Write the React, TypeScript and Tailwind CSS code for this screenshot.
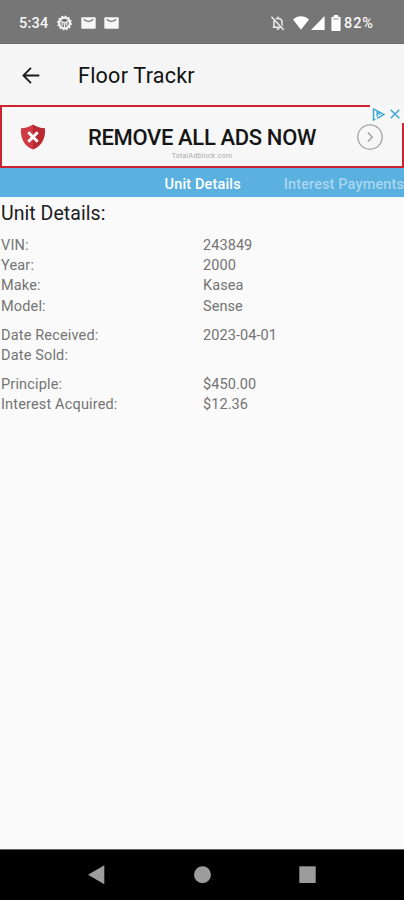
import clsx from 'clsx';

const groups = [
  [
    { label: 'VIN:', value: '243849' },
    { label: 'Year:', value: '2000' },
    { label: 'Make:', value: 'Kasea' },
    { label: 'Model:', value: 'Sense' },
  ],
  [
    { label: 'Date Received:', value: '2023-04-01' },
    { label: 'Date Sold:', value: '' },
  ],
  [
    { label: 'Principle:', value: '$450.00' },
    { label: 'Interest Acquired:', value: '$12.36' },
  ],
];

function HelmIcon() {
  return (
    <svg className="h-4 w-4" viewBox="0 0 16 16" fill="none" stroke="#f4f4f4">
      <circle cx="7.500" cy="8" r="5.400" strokeWidth="2.200" />
      <circle cx="7.500" cy="8" r="6.800" strokeWidth="1.200" strokeDasharray="2 1.560" />
      <path d="M7.500 8v4M7.500 8L3.500 6M7.500 8l4-2M5.300 7v3.500M9.700 7v3.500" strokeWidth="1.200" />
    </svg>
  );
}

function MailIcon() {
  return (
    <svg className="h-3 w-[15px]" viewBox="0 0 15 12">
      <rect x="0.3" y="0.2" width="14.4" height="11.6" rx="1" fill="#f6f6f6" />
      <path d="M2.800 2.300q4.700 4.200 9.400 0" fill="none" stroke="#777" strokeWidth="1.200" />
    </svg>
  );
}

function BellOffIcon() {
  return (
    <svg className="h-4 w-4" viewBox="0 0 16 16" fill="none" stroke="#ededed">
      <path d="M4 12V7.200C4 4.800 5.600 3.400 8 3.400s4 1.400 4 3.800V12M2.700 12.200h10.600M8 1.400v2" strokeWidth="1.500" />
      <path d="M6.600 14h2.800" strokeWidth="1.500" />
      <path d="M2.400 1.300l12.400 13.200" stroke="#777" strokeWidth="1.400" />
      <path d="M1.400 1.800l12.400 13.200" strokeWidth="1.400" />
    </svg>
  );
}

function StatusBar() {
  return (
    <div className="flex h-11 items-center bg-[#767676] pt-0.5 pl-[19px] text-[14.500px] font-medium text-[#f6f6f6] shadow-[inset_0_-1px_0_#6a6a6a]">
      <span className="w-[38px] pt-0.5 tracking-[0.2px]">5:34</span>
      <HelmIcon />
      <div className="ml-2 flex gap-2">
        <MailIcon />
        <MailIcon />
      </div>
      <div className="ml-[151px] flex items-center">
        <BellOffIcon />
        <svg className="ml-[7px] h-[14px] w-4" viewBox="0 0 16 14">
          <path d="M0 3.600C2.200 1.400 5 .2 8 .2s5.800 1.200 8 3.400L8 13.800z" fill="#fff" />
        </svg>
        <svg className="ml-0.5 h-[14px] w-[14px]" viewBox="0 0 14 14">
          <path d="M13.600 0v14H0z" fill="#fff" />
        </svg>
        <svg className="ml-1.5 h-4 w-[10px]" viewBox="0 0 10 16">
          <path d="M3 0h4v1.700h1.600q1 0 1 1V15q0 1-1 1H1.400q-1 0-1-1V2.700q0-1 1-1H3z" fill="#fff" />
          <path d="M2.500 4h5" stroke="#999" strokeWidth="1.200" />
        </svg>
        <span className="ml-[3px] pt-0.5 tracking-[0.9px]">82%</span>
      </div>
    </div>
  );
}

function AppBar() {
  return (
    <header className="flex h-[61px] items-center bg-[#f5f5f5] pt-0.5 pl-[22px]">
      <svg className="h-[18px] w-[18px]" viewBox="0 0 18 18" fill="none" stroke="#1b1b1b" strokeWidth="1.800">
        <path d="M17.300 8.500H1.800M9 .9L1.400 8.500 9 16.100" />
      </svg>
      <h1 className="ml-[38px] pt-px text-[21.500px] tracking-[0.250px] text-[#111]">Floor Trackr</h1>
    </header>
  );
}

function AdBanner() {
  return (
    <div className="relative flex h-[63px] items-center border-2 border-[#cb2430] bg-[#f7f7f7]">
      <svg className="ml-[18px] h-[26px] w-[26px]" viewBox="0 0 26 26">
        <path d="M13 .6C9.800 3 5 4.200 1 4.200c-.6 10 2.600 17.200 12 21.400z" fill="#cf3941" />
        <path d="M13 .6c3.200 2.400 8 3.600 12 3.600.6 10-2.600 17.200-12 21.400z" fill="#b92932" />
        <path d="M8.300 8.300l9.400 9.400M17.700 8.300l-9.400 9.400" stroke="#fff" strokeWidth="3" />
      </svg>
      <div className="ml-[42px] w-[228px] pt-[15px] text-center whitespace-nowrap">
        <p className="text-[22px] leading-6 font-medium tracking-[-0.350px] text-[#151515]">REMOVE ALL ADS NOW</p>
        <p className="text-[7px] leading-[13px] tracking-[0.250px] text-[#aaa]">TotalAdblock.com</p>
      </div>
      <svg className="ml-[41px] h-[26px] w-[26px]" viewBox="0 0 26 26" fill="none" stroke="#a3a3a3">
        <circle cx="13" cy="13" r="12.200" strokeWidth="1.300" />
        <path d="M11 8.600l4.200 4.400-4.200 4.400" strokeWidth="1.500" />
      </svg>
      <div className="absolute -top-0.5 -right-0.5 flex h-[18px] w-[34px] items-center gap-[5px] rounded-bl bg-[#f7f7f7] pl-0.5">
        <svg className="h-[13px] w-[13px]" viewBox="0 0 13 13" fill="none" stroke="#35a5cf" strokeWidth="1.400">
          <path d="M5 10.300l7-3.800L1.500 1v11l1.800-.9M5.200 8.500v-4L8.500 6.500" />
        </svg>
        <svg className="h-[10px] w-[10px]" viewBox="0 0 10 10" stroke="#35a5cf" strokeWidth="1.400">
          <path d="M.7.7l8.600 8.600M9.300.7L.7 9.300" />
        </svg>
      </div>
    </div>
  );
}

function TabStrip() {
  return (
    <nav className="flex h-[29px] items-center justify-end overflow-hidden bg-[#5ab0df] pt-[5px] text-[14.500px] font-medium whitespace-nowrap">
      <span className="mr-[43px] tracking-[0.150px] text-white">Unit Details</span>
      <span className="tracking-[0.120px] text-[#a9d6ef]">Interest Payments</span>
    </nav>
  );
}

function UnitDetails() {
  return (
    <main className="flex-1 bg-[#fafafa]">
      <h2 className="pt-1 pl-[1px] text-[19.500px] leading-[26px] tracking-[0.050px] text-[#202020]">Unit Details:</h2>
      <div className="pt-[8.500px] text-[14.500px] tracking-[0.070px] text-[#747474]">
        {groups.map((rows, i) => (
          <dl key={rows[0].label} className={clsx(i > 0 && 'mt-[8.500px]')}>
            {rows.map((row) => (
              <div key={row.label} className="grid h-[20.400px] grid-cols-2 leading-[20.400px]">
                <dt className="pl-px tracking-[0.160px]">{row.label}</dt>
                <dd className="pl-px">{row.value}</dd>
              </div>
            ))}
          </dl>
        ))}
      </div>
    </main>
  );
}

function NavigationBar() {
  return (
    <footer className="h-[51px] border-t border-[#666] bg-black">
      <svg className="h-[50px] w-full" viewBox="0 0 404 50" fill="#9c9c9c">
        <path d="M88 24.700l16.300-9.500v19z" />
        <circle cx="202.500" cy="24.700" r="8.500" />
        <rect x="299.300" y="16.300" width="16.400" height="16.700" />
      </svg>
    </footer>
  );
}

export default function App() {
  return (
    <div className="flex h-[900px] w-[404px] flex-col overflow-hidden bg-[#fafafa] font-[Roboto,sans-serif]">
      <StatusBar />
      <AppBar />
      <AdBanner />
      <TabStrip />
      <UnitDetails />
      <NavigationBar />
    </div>
  );
}
